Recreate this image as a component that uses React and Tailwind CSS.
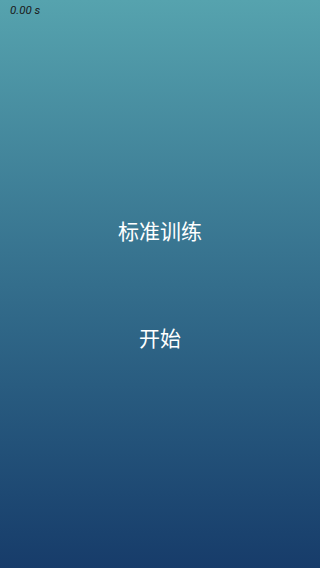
export default function App() {
  return (
    <div
      className="relative w-[320px] h-[568px] flex flex-col items-center bg-gradient-to-b from-[#56a3ae] to-[#173c6a] text-white"
      style={{ fontFamily: '"Noto Sans", "Noto Sans CJK SC", sans-serif' }}
    >
      <div className="absolute left-[10px] top-[2px] text-[11.5px] italic text-[#1a1a1a]" style={{ fontFamily: 'Roboto, "Noto Sans", sans-serif' }}>
        0.00 s
      </div>
      <div className="mt-[216px] text-[21px] leading-[30px]">标准训练</div>
      <div className="mt-[77px] text-[21px] leading-[30px]">开始</div>
    </div>
  )
}
